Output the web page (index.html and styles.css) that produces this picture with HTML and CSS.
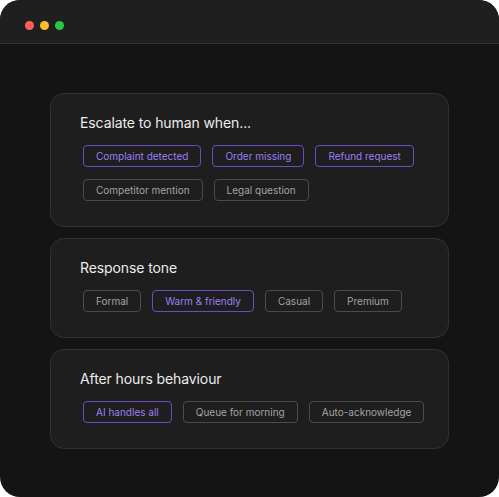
FILE: index.html
```html
<!DOCTYPE html>
<html>
<head>
<meta charset="utf-8">
<link rel="stylesheet" href="styles.css">
</head>
<body>
<div class="window">
  <div class="titlebar">
    <span class="dot red"></span>
    <span class="dot yellow"></span>
    <span class="dot green"></span>
  </div>
  <div class="content">
    <section class="card">
      <h2 class="title">Escalate to human when...</h2>
      <div class="chips">
        <div class="row">
          <span class="chip active">Complaint detected</span>
          <span class="chip active">Order missing</span>
          <span class="chip active">Refund request</span>
        </div>
        <div class="row">
          <span class="chip">Competitor mention</span>
          <span class="chip">Legal question</span>
        </div>
      </div>
    </section>
    <section class="card">
      <h2 class="title">Response tone</h2>
      <div class="chips">
        <div class="row">
          <span class="chip">Formal</span>
          <span class="chip active">Warm &amp; friendly</span>
          <span class="chip">Casual</span>
          <span class="chip">Premium</span>
        </div>
      </div>
    </section>
    <section class="card">
      <h2 class="title">After hours behaviour</h2>
      <div class="chips">
        <div class="row">
          <span class="chip active">AI handles all</span>
          <span class="chip">Queue for morning</span>
          <span class="chip">Auto-acknowledge</span>
        </div>
      </div>
    </section>
  </div>
</div>
</body>
</html>
```
FILE: styles.css
```css
* { box-sizing: border-box; }
html, body {
  margin: 0;
  padding: 0;
  background: #ffffff;
  font-family: "Inter", "Noto Sans", sans-serif;
}
.window {
  width: 499px;
  height: 497px;
  background: #141414;
  border-radius: 20px;
  overflow: hidden;
  display: flex;
  flex-direction: column;
}
.titlebar {
  height: 44px;
  background: #1f1f1f;
  border-bottom: 1px solid #333333;
  display: flex;
  align-items: flex-start;
  gap: 6px;
  padding-left: 25px;
  padding-top: 21px;
  flex: none;
}
.dot {
  width: 9px;
  height: 9px;
  border-radius: 50%;
  display: block;
}
.red { background: #ff5f57; }
.yellow { background: #febc2e; }
.green { background: #28c840; }
.content {
  padding: 49px 50px 0 50px;
  display: flex;
  flex-direction: column;
  gap: 11px;
}
.card {
  background: #1e1e1e;
  border: 1px solid #313131;
  border-radius: 14px;
  padding: 19px 29px 25px 29px;
}
.title {
  margin: 0 0 12px 0;
  font-size: 14px;
  font-weight: 400;
  color: #ececec;
  line-height: 20px;
  letter-spacing: -0.1px;
}
.chips {
  display: flex;
  flex-direction: column;
  gap: 12px;
  padding-left: 3px;
}
.row {
  display: flex;
  gap: 11px;
}
.chip {
  display: block;
  white-space: nowrap;
  height: 22px;
  line-height: 20px;
  padding: 0 12px;
  border: 1px solid #4b4b4b;
  border-radius: 4px;
  font-size: 10px;
  color: #a3a3a3;
}
.chip.active {
  border-color: #6a4cc2;
  color: #9d7ff2;
}
```
